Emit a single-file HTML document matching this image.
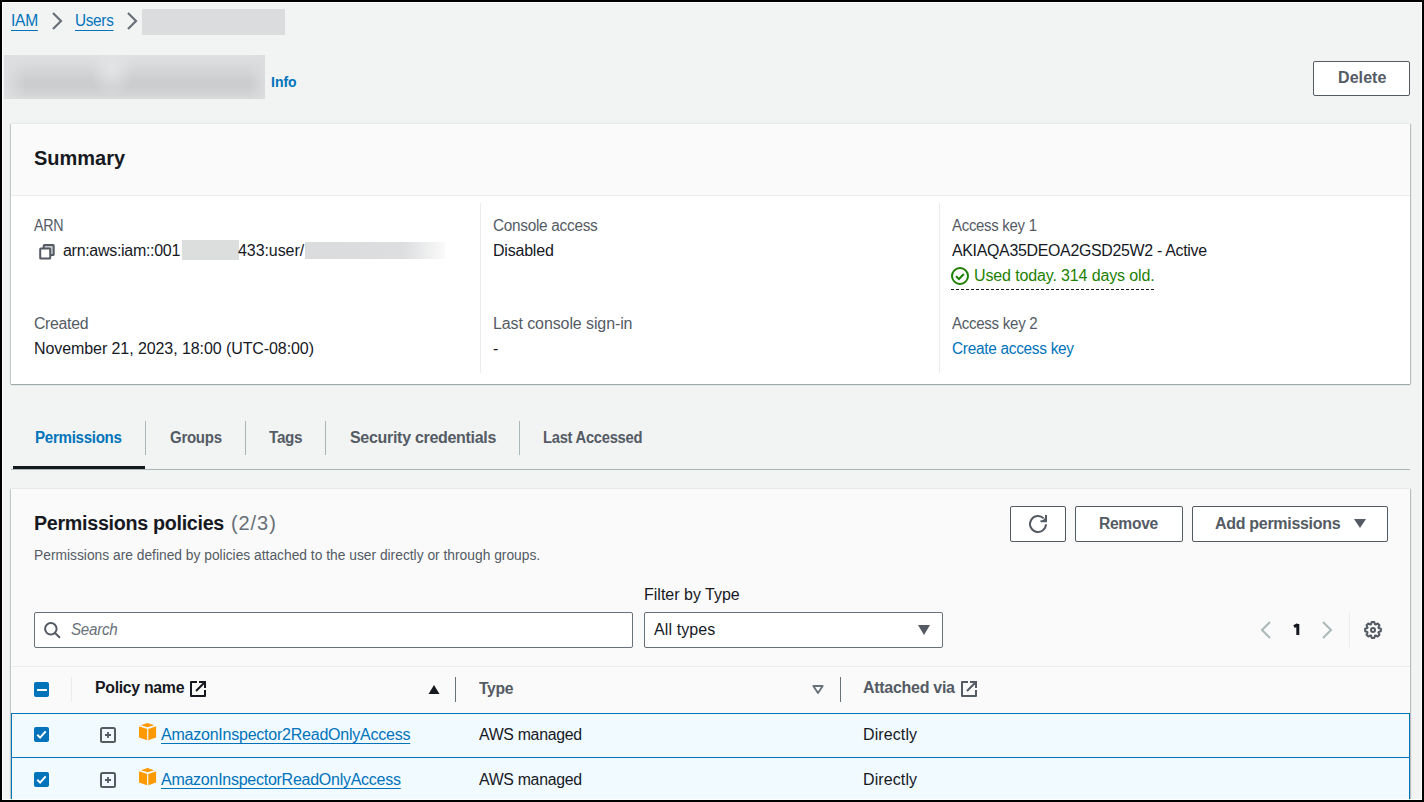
<!DOCTYPE html>
<html><head><meta charset="utf-8">
<style>
*{box-sizing:border-box;margin:0;padding:0}
html,body{width:1424px;height:802px;overflow:hidden}
body{background:#000;font-family:"Liberation Sans",sans-serif;color:#16191f;position:relative}
#frame{position:absolute;left:2px;top:2px;width:1420px;height:798px;background:#f2f3f3;border:1px solid #fff}
.a{position:absolute;white-space:nowrap;line-height:1}
.blur{position:absolute;background:#d5d7d9}
.card{position:absolute;background:#fff;box-shadow:0 -1px 0 0 #e6eaea,0 1px 1px 0 rgba(0,28,36,.3),1px 0 1px 0 rgba(0,28,36,.2),-1px 0 1px 0 rgba(0,28,36,.15)}
.btn{position:absolute;background:#fff;border:1px solid #545b64;border-radius:2px}
.vdiv{position:absolute;width:1px;background:#eaeded}
.cb{position:absolute;width:15px;height:15px;border-radius:2px;background:#0073bb}
</style></head><body>
<div id="frame"></div>
<!-- breadcrumbs -->
<svg class="a" style="left:50px;top:11px" width="14" height="20" viewBox="0 0 14 20"><path d="M3 2 L11 10 L3 18" fill="none" stroke="#687078" stroke-width="2.2"/></svg>
<svg class="a" style="left:125px;top:11px" width="14" height="20" viewBox="0 0 14 20"><path d="M3 2 L11 10 L3 18" fill="none" stroke="#687078" stroke-width="2.2"/></svg>
<div class="blur" style="left:142px;top:9px;width:143px;height:26px;background:#dadcdd"></div>
<!-- title -->
<div class="blur" style="left:4px;top:55px;width:261px;height:44px;background:radial-gradient(ellipse 22px 30px at 108px 30%,rgba(228,229,230,.9),rgba(228,229,230,0)),linear-gradient(90deg,rgba(222,223,224,.95) 0,rgba(222,223,224,0) 22px),linear-gradient(270deg,rgba(220,221,222,.9) 0,rgba(220,221,222,0) 16px),linear-gradient(180deg,#dfe0e1 0%,#d8d9da 25%,#cdcecf 55%,#cbcccd 70%,#d3d4d5 90%,#d9dadb 100%)"></div>
<div class="btn" style="left:1313px;top:61px;width:97px;height:35px"></div>

<!-- summary card -->
<div class="card" style="left:11px;top:124px;width:1399px;height:260px">
  <div style="position:absolute;left:0;top:0;width:100%;height:72px;background:#fafafa;border-bottom:1px solid #eaeded"></div>
</div>
<div class="vdiv" style="left:480px;top:203px;height:170px"></div>
<div class="vdiv" style="left:939px;top:203px;height:170px"></div>
<svg class="a" style="left:38px;top:243px" width="18" height="18" viewBox="0 0 18 18"><rect x="5.7" y="2.1" width="10" height="10" rx="0.6" fill="#c6cacd" stroke="#545b64" stroke-width="2"/><rect x="2.2" y="5.6" width="10" height="10" rx="0.6" fill="#fff" stroke="#545b64" stroke-width="2"/></svg>
<div class="blur" style="left:182px;top:240px;width:57px;height:19.5px;background:#dcdddd"></div>
<div class="blur" style="left:305px;top:241.8px;width:140px;height:17.7px;background:linear-gradient(90deg,#d9dbdc 0%,#dcdedf 70%,#fafafa 100%)"></div>
<svg class="a" style="left:951px;top:267px" width="18" height="18" viewBox="0 0 18 18"><circle cx="9" cy="9" r="8" fill="none" stroke="#1d8102" stroke-width="2"/><path d="M5 9.2l3 2.8 4.8-5" fill="none" stroke="#1d8102" stroke-width="2"/></svg>
<div class="a" style="left:951px;top:289px;width:205px;height:1px;background:repeating-linear-gradient(90deg,#16191f 0 3px,transparent 3px 5px)"></div>

<!-- tabs -->
<div class="a" style="left:11px;top:469px;width:1399px;height:1px;background:#aab7b8"></div>
<div class="a" style="left:13px;top:466px;width:132px;height:3px;background:#16191f"></div>
<div class="vdiv" style="left:145px;top:421px;height:34px;background:#aab7b8"></div>
<div class="vdiv" style="left:245px;top:421px;height:34px;background:#aab7b8"></div>
<div class="vdiv" style="left:325px;top:421px;height:34px;background:#aab7b8"></div>
<div class="vdiv" style="left:519px;top:421px;height:34px;background:#aab7b8"></div>

<!-- permissions card -->
<div class="card" style="left:11px;top:489px;width:1399px;height:400px;background:#fafafa"></div>
<div class="btn" style="left:1010px;top:506px;width:56px;height:36px"></div>
<svg class="a" style="left:1028px;top:514px" width="20" height="20" viewBox="0 0 20 20"><path d="M18 10.3A8 8 0 1 1 15.66 4.34" fill="none" stroke="#545b64" stroke-width="2"/><path d="M18 1V7.2H12.5" fill="none" stroke="#545b64" stroke-width="2"/><path d="M18 3L18 7L14 7Z" fill="#545b64"/></svg>
<div class="btn" style="left:1075px;top:506px;width:108px;height:36px"></div>
<div class="btn" style="left:1192px;top:506px;width:196px;height:36px"></div>
<svg class="a" style="left:1353px;top:518px" width="14" height="12" viewBox="0 0 14 12"><path d="M1 1h12L7 10z" fill="#545b64"/></svg>

<div class="a" style="left:34px;top:612px;width:599px;height:36px;background:#fff;border:1px solid #687078;border-radius:2px"></div>
<svg class="a" style="left:41px;top:619px" width="22" height="22" viewBox="0 0 22 22"><circle cx="9.85" cy="9.85" r="5.75" fill="none" stroke="#545b64" stroke-width="2"/><path d="M13.8 13.8l4.6 4.4" stroke="#545b64" stroke-width="2" stroke-linecap="round"/></svg>
<div class="a" style="left:644px;top:612px;width:299px;height:36px;background:#fff;border:1px solid #687078;border-radius:2px"></div>
<svg class="a" style="left:916px;top:623px" width="16" height="14" viewBox="0 0 16 14"><path d="M2 2h12L8 12z" fill="#545b64"/></svg>

<svg class="a" style="left:1257px;top:620px" width="16" height="20" viewBox="0 0 16 20"><path d="M13 2L5 10l8 8" fill="none" stroke="#aab7b8" stroke-width="2"/></svg>
<svg class="a" style="left:1290px;top:620px" width="14" height="20" viewBox="0 0 14 20"><path d="M7.8 4v11M4 6.6L7.8 4.6" fill="none" stroke="#16191f" stroke-width="3"/></svg>
<svg class="a" style="left:1320px;top:620px" width="16" height="20" viewBox="0 0 16 20"><path d="M3 2l8 8-8 8" fill="none" stroke="#aab7b8" stroke-width="2"/></svg>
<div class="vdiv" style="left:1349px;top:612px;height:35px"></div>
<svg class="a" style="left:1363px;top:620px" width="20" height="20" viewBox="0 0 20 20"><path d="M8.00 4.34 L8.71 2.11 L11.29 2.11 L12.00 4.34 L12.59 4.59 L14.67 3.50 L16.50 5.33 L15.41 7.41 L15.66 8.00 L17.89 8.71 L17.89 11.29 L15.66 12.00 L15.41 12.59 L16.50 14.67 L14.67 16.50 L12.59 15.41 L12.00 15.66 L11.29 17.89 L8.71 17.89 L8.00 15.66 L7.41 15.41 L5.33 16.50 L3.50 14.67 L4.59 12.59 L4.34 12.00 L2.11 11.29 L2.11 8.71 L4.34 8.00 L4.59 7.41 L3.50 5.33 L5.33 3.50 L7.41 4.59Z" fill="none" stroke="#545b64" stroke-width="2" stroke-linejoin="round"/><circle cx="10" cy="10" r="2" fill="none" stroke="#545b64" stroke-width="2"/></svg>

<!-- table -->
<div class="a" style="left:11px;top:666px;width:1399px;height:1px;background:#eaeded"></div>
<div class="cb" style="left:34px;top:682px"><div style="position:absolute;left:3px;top:6.5px;width:9.5px;height:2px;background:#fff"></div></div>
<div class="vdiv" style="left:71px;top:677px;height:25px"></div>
<svg class="a" style="left:190px;top:681px" width="16" height="16" viewBox="0 0 16 16"><path d="M7 1H1v14h14V9" fill="none" stroke="#16191f" stroke-width="2" stroke-linejoin="round"/><path d="M9 1h6v6M15 1L6 10" fill="none" stroke="#16191f" stroke-width="2"/></svg>
<svg class="a" style="left:427px;top:684px" width="14" height="12" viewBox="0 0 14 12"><path d="M1.5 10h11L7 1z" fill="#16191f"/></svg>
<div class="vdiv" style="left:455px;top:677px;height:25px;background:#687078"></div>
<svg class="a" style="left:811px;top:684px" width="14" height="12" viewBox="0 0 14 12"><path d="M2.3 2h9.4L7 9z" fill="none" stroke="#687078" stroke-width="1.8" stroke-linejoin="round"/></svg>
<div class="vdiv" style="left:840px;top:677px;height:25px;background:#687078"></div>
<svg class="a" style="left:961px;top:681px" width="16" height="16" viewBox="0 0 16 16"><path d="M7 1H1v14h14V9" fill="none" stroke="#545b64" stroke-width="2" stroke-linejoin="round"/><path d="M9 1h6v6M15 1L6 10" fill="none" stroke="#545b64" stroke-width="2"/></svg>

<div class="a" style="left:11px;top:713px;width:1399px;height:100px;background:#f1faff;border:1px solid #0073bb"></div>
<div class="a" style="left:11px;top:757px;width:1399px;height:1px;background:#0073bb"></div>

<div class="cb" style="left:34px;top:727px"><svg style="position:absolute;left:0;top:0" width="15" height="15" viewBox="0 0 15 15"><path d="M3.3 7.8l2.8 2.8 5.6-6.2" fill="none" stroke="#fff" stroke-width="2"/></svg></div>
<svg class="a" style="left:100px;top:727px" width="16" height="16" viewBox="0 0 16 16"><rect x="1" y="1" width="14" height="14" rx="1.5" fill="none" stroke="#545b64" stroke-width="2"/><path d="M8 5v6M5 8h6" stroke="#545b64" stroke-width="1.8"/></svg>
<svg class="a" style="left:139px;top:723px" width="18" height="18" viewBox="0 0 18 18"><path d="M8.5 0L15.2 2.2 8.5 4.2 1.8 2.2z" fill="#ff9900"/><path d="M0 3.3L8.1 6.1V17.2L0 14.5z" fill="#ff9900"/><path d="M17.1 3.3L9.3 6.1V17.2L17.1 14.5z" fill="#ff9900"/></svg>

<div class="cb" style="left:34px;top:772px"><svg style="position:absolute;left:0;top:0" width="15" height="15" viewBox="0 0 15 15"><path d="M3.3 7.8l2.8 2.8 5.6-6.2" fill="none" stroke="#fff" stroke-width="2"/></svg></div>
<svg class="a" style="left:100px;top:772px" width="16" height="16" viewBox="0 0 16 16"><rect x="1" y="1" width="14" height="14" rx="1.5" fill="none" stroke="#545b64" stroke-width="2"/><path d="M8 5v6M5 8h6" stroke="#545b64" stroke-width="1.8"/></svg>
<svg class="a" style="left:139px;top:768px" width="18" height="18" viewBox="0 0 18 18"><path d="M8.5 0L15.2 2.2 8.5 4.2 1.8 2.2z" fill="#ff9900"/><path d="M0 3.3L8.1 6.1V17.2L0 14.5z" fill="#ff9900"/><path d="M17.1 3.3L9.3 6.1V17.2L17.1 14.5z" fill="#ff9900"/></svg>

<div class="a" style="left:11px;top:13px;font-size:16px;color:#0073bb;letter-spacing:-0.30px;transform:scaleX(0.9748);transform-origin:0 0;text-decoration:underline;text-underline-offset:4px">IAM</div>
<div class="a" style="left:75px;top:13px;font-size:16px;color:#0073bb;letter-spacing:-0.30px;transform:scaleX(0.9557);transform-origin:0 0;text-decoration:underline;text-underline-offset:4px">Users</div>
<div class="a" style="left:271px;top:75px;font-size:14px;color:#0073bb;font-weight:bold">Info</div>
<div class="a" style="left:1338px;top:70px;font-size:16px;color:#545b64;font-weight:bold;letter-spacing:0.08px">Delete</div>
<div class="a" style="left:34px;top:148px;font-size:20px;color:#16191f;font-weight:bold">Summary</div>
<div class="a" style="left:34px;top:218px;font-size:16px;color:#545b64;letter-spacing:-0.30px;transform:scaleX(0.8916);transform-origin:0 0">ARN</div>
<div class="a" style="left:63px;top:243px;font-size:16px;color:#16191f;letter-spacing:-0.30px">arn:aws:iam::001</div>
<div class="a" style="left:238px;top:243px;font-size:16px;color:#16191f;letter-spacing:-0.07px">433:user/</div>
<div class="a" style="left:34px;top:316px;font-size:16px;color:#545b64;letter-spacing:-0.30px;transform:scaleX(0.9873);transform-origin:0 0">Created</div>
<div class="a" style="left:34px;top:341px;font-size:16px;color:#16191f;letter-spacing:-0.08px">November 21, 2023, 18:00 (UTC-08:00)</div>
<div class="a" style="left:493px;top:218px;font-size:16px;color:#545b64;letter-spacing:-0.30px;transform:scaleX(0.9606);transform-origin:0 0">Console access</div>
<div class="a" style="left:493px;top:243px;font-size:16px;color:#16191f;letter-spacing:-0.21px">Disabled</div>
<div class="a" style="left:493px;top:316px;font-size:16px;color:#545b64;letter-spacing:-0.10px">Last console sign-in</div>
<div class="a" style="left:493px;top:341px;font-size:16px;color:#16191f">-</div>
<div class="a" style="left:952px;top:218px;font-size:16px;color:#545b64;letter-spacing:-0.30px;transform:scaleX(0.9341);transform-origin:0 0">Access key 1</div>
<div class="a" style="left:952px;top:243px;font-size:16px;color:#16191f;letter-spacing:-0.30px;transform:scaleX(0.9938);transform-origin:0 0">AKIAQA35DEOA2GSD25W2 - Active</div>
<div class="a" style="left:974px;top:268px;font-size:16px;color:#1d8102;letter-spacing:-0.13px">Used today. 314 days old.</div>
<div class="a" style="left:952px;top:316px;font-size:16px;color:#545b64;letter-spacing:-0.30px;transform:scaleX(0.9418);transform-origin:0 0">Access key 2</div>
<div class="a" style="left:952px;top:341px;font-size:16px;color:#0073bb;letter-spacing:-0.30px;transform:scaleX(0.9621);transform-origin:0 0">Create access key</div>
<div class="a" style="left:35px;top:430px;font-size:16px;color:#0073bb;font-weight:bold;letter-spacing:-0.30px;transform:scaleX(0.9436);transform-origin:0 0">Permissions</div>
<div class="a" style="left:170px;top:430px;font-size:16px;color:#545b64;font-weight:bold;letter-spacing:-0.30px;transform:scaleX(0.9386);transform-origin:0 0">Groups</div>
<div class="a" style="left:269px;top:430px;font-size:16px;color:#545b64;font-weight:bold;letter-spacing:-0.30px;transform:scaleX(0.9518);transform-origin:0 0">Tags</div>
<div class="a" style="left:350px;top:430px;font-size:16px;color:#545b64;font-weight:bold;letter-spacing:-0.30px">Security credentials</div>
<div class="a" style="left:543px;top:430px;font-size:16px;color:#545b64;font-weight:bold;letter-spacing:-0.30px;transform:scaleX(0.9222);transform-origin:0 0">Last Accessed</div>
<div class="a" style="left:34px;top:513px;font-size:20px;color:#16191f;font-weight:bold;letter-spacing:-0.30px;transform:scaleX(0.9845);transform-origin:0 0">Permissions policies</div>
<div class="a" style="left:231px;top:513px;font-size:20px;color:#687078;letter-spacing:0.92px">(2/3)</div>
<div class="a" style="left:34px;top:549px;font-size:13.8px;color:#545b64">Permissions are defined by policies attached to the user directly or through groups.</div>
<div class="a" style="left:1099px;top:516px;font-size:16px;color:#545b64;font-weight:bold;letter-spacing:-0.30px;transform:scaleX(0.9753);transform-origin:0 0">Remove</div>
<div class="a" style="left:1215px;top:516px;font-size:16px;color:#545b64;font-weight:bold;letter-spacing:-0.30px">Add permissions</div>
<div class="a" style="left:644px;top:587px;font-size:16px;color:#16191f">Filter by Type</div>
<div class="a" style="left:71px;top:622px;font-size:16px;color:#687078;letter-spacing:-0.30px;transform:scaleX(0.9492);transform-origin:0 0;font-style:italic">Search</div>
<div class="a" style="left:654px;top:622px;font-size:16px;color:#16191f;letter-spacing:0.11px">All types</div>
<div class="a" style="left:95px;top:680px;font-size:16px;color:#16191f;font-weight:bold;letter-spacing:-0.30px;transform:scaleX(0.9900);transform-origin:0 0">Policy name</div>
<div class="a" style="left:479px;top:681px;font-size:16px;color:#545b64;font-weight:bold;letter-spacing:-0.30px;transform:scaleX(0.9802);transform-origin:0 0">Type</div>
<div class="a" style="left:863px;top:680px;font-size:16px;color:#545b64;font-weight:bold;letter-spacing:-0.29px">Attached via</div>
<div class="a" style="left:161px;top:727px;font-size:16px;color:#0073bb;letter-spacing:-0.23px;text-decoration:underline;text-underline-offset:3px">AmazonInspector2ReadOnlyAccess</div>
<div class="a" style="left:479px;top:727px;font-size:16px;color:#16191f;letter-spacing:-0.30px;transform:scaleX(0.9904);transform-origin:0 0">AWS managed</div>
<div class="a" style="left:863px;top:727px;font-size:16px;color:#16191f;letter-spacing:0.10px">Directly</div>
<div class="a" style="left:161px;top:772px;font-size:16px;color:#0073bb;letter-spacing:-0.26px;text-decoration:underline;text-underline-offset:3px">AmazonInspectorReadOnlyAccess</div>
<div class="a" style="left:479px;top:772px;font-size:16px;color:#16191f;letter-spacing:-0.30px;transform:scaleX(0.9904);transform-origin:0 0">AWS managed</div>
<div class="a" style="left:863px;top:772px;font-size:16px;color:#16191f;letter-spacing:0.10px">Directly</div>
<div class="a" style="left:2px;top:799px;width:1420px;height:1px;background:#fff"></div>
<div class="a" style="left:0;top:800px;width:1424px;height:2px;background:#000"></div>
<div class="a" style="left:0;top:0;width:2px;height:802px;background:#000"></div>
<div class="a" style="left:1422px;top:0;width:2px;height:802px;background:#000"></div>
<div class="a" style="left:0;top:0;width:1424px;height:2px;background:#000"></div>
</body></html>
